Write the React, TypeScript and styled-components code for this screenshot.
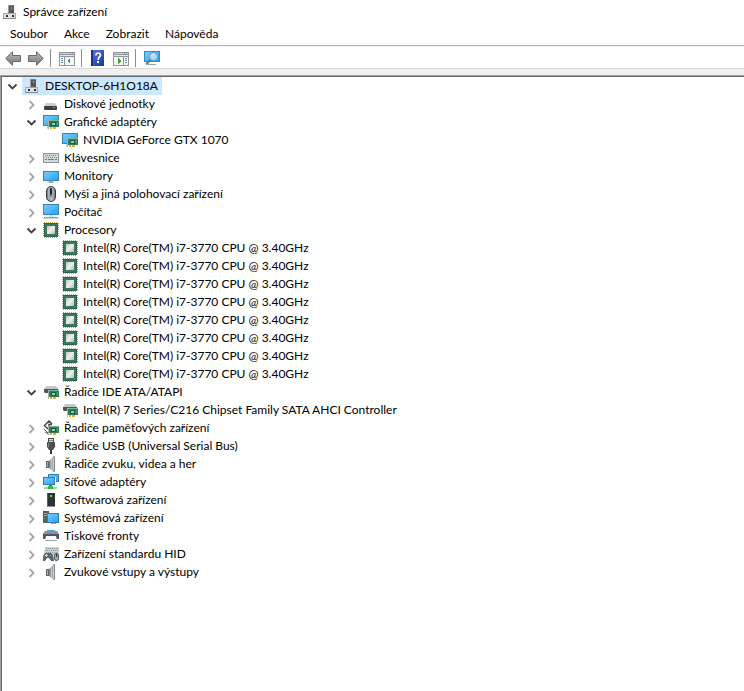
import React, { useState } from 'react';
import styled, { createGlobalStyle } from 'styled-components';

const GlobalStyle = createGlobalStyle`
  html, body, #root { height: 100%; }
  body {
    margin: 0;
    background: #fff;
    color: #000;
    font: 12px/18px Lato, "Open Sans", sans-serif;
  }
  button { font: inherit; color: inherit; }
`;

const Window = styled.main`
  display: flex;
  flex-direction: column;
  min-height: 100%;
`;

const TitleBar = styled.header`
  display: flex;
  align-items: center;
  gap: 5px;
  height: 23px;
  padding-left: 2px;
`;

const Title = styled.h1`
  margin: 0;
  font: inherit;
`;

const MenuBar = styled.nav`
  display: flex;
  height: 22px;
  padding-left: 2px;
  border-bottom: 1px solid #b0b0b3;
`;

const MenuItem = styled.button`
  padding: 0 8px;
  border: 0;
  background: none;
  &:hover { background: #e5f3ff; }
`;

const ToolBar = styled.div`
  display: flex;
  align-items: center;
  gap: 1px;
  height: 21px;
  padding-left: 2px;
  border-top: 1px solid #f4f4fa;
  border-bottom: 1px solid #d7d7d7;
`;

const ToolButton = styled.button`
  display: grid;
  place-items: center;
  width: 22px;
  height: 22px;
  padding: 0;
  border: 0;
  background: none;
  &:hover { background: #e5f3ff; }
`;

const Separator = styled.span`
  width: 1px;
  height: 18px;
  margin: 0 4px 0 2px;
  background: #8d8d8d;
`;

const Content = styled.section`
  display: flex;
  flex: 1;
  padding-top: 6px;
  background: #f0f0f0;
`;

const TreePane = styled.div`
  flex: 1;
  border: solid #a0a0a0;
  border-width: 1px 0 0 1px;
  background: #fff;
`;

const TreeInner = styled.div`
  height: 100%;
  box-sizing: border-box;
  border: solid #696969;
  border-width: 1px 0 0 1px;
`;

const Tree = styled.ul`
  margin: 0;
  padding: 0;
  list-style: none;
`;

const Branch = styled(Tree)`
  padding-left: 19px;
`;

const Row = styled.div`
  display: flex;
  height: 18px;
`;

const Toggle = styled.button<{ $open: boolean }>`
  display: grid;
  place-items: center;
  width: 20px;
  padding: 0;
  border: 0;
  background: none;
  color: ${(p) => (p.$open ? '#404040' : '#a6a6a6')};
`;

const Spacer = styled.span`
  width: 20px;
`;

const Label = styled.button<{ $selected: boolean }>`
  display: flex;
  align-items: center;
  gap: 5px;
  padding: 0 4px 0 2px;
  border: 0;
  outline: 0;
  white-space: nowrap;
  background: ${(p) => (p.$selected ? '#cce8ff' : 'none')};
`;

const Glyph = styled.svg.attrs({ width: 16, height: 16, viewBox: '0 0 16 16', 'aria-hidden': true })`
  display: block;
  flex: none;
`;

const Defs = styled.svg.attrs({ width: 0, height: 0, 'aria-hidden': true })`
  position: absolute;
`;

const Gradients = () => (
  <Defs>
    <defs>
      <linearGradient id="screen" x1="0" y1="0" x2="1" y2="1">
        <stop offset="0" stopColor="#7accff" />
        <stop offset="0.5" stopColor="#4fb8fb" />
        <stop offset="1" stopColor="#2a9df0" />
      </linearGradient>
      <linearGradient id="steel" x1="0" y1="0" x2="1" y2="0">
        <stop offset="0" stopColor="#6d7478" />
        <stop offset="0.55" stopColor="#c3c7ca" />
        <stop offset="1" stopColor="#6b7175" />
      </linearGradient>
      <linearGradient id="chip" x1="0" y1="0" x2="1" y2="1">
        <stop offset="0" stopColor="#c6c6c6" />
        <stop offset="0.5" stopColor="#efefef" />
        <stop offset="1" stopColor="#b8b8b8" />
      </linearGradient>
      <linearGradient id="arrow" x1="0" y1="0" x2="0" y2="1">
        <stop offset="0" stopColor="#bcbcbc" />
        <stop offset="1" stopColor="#747474" />
      </linearGradient>
      <linearGradient id="help" x1="0" y1="0" x2="1" y2="1">
        <stop offset="0" stopColor="#5877e0" />
        <stop offset="1" stopColor="#1733a0" />
      </linearGradient>
    </defs>
  </Defs>
);

const Board = () => (
  <g shapeRendering="crispEdges">
    <rect x="6" y="6" width="10" height="7" fill="#2f7d5a" />
    <rect x="5" y="6" width="1" height="9" fill="#a9b3af" />
    <rect x="6" y="6" width="10" height="1" fill="#74b795" />
    <rect x="8" y="8" width="5" height="4" fill="#1d5c40" />
    <rect x="9" y="9" width="3" height="2" fill="#8ed3ae" />
    <rect x="14" y="8" width="1" height="3" fill="#4ea27b" />
    <rect x="7" y="13" width="2" height="2" fill="#efab22" />
    <rect x="10" y="13" width="3" height="2" fill="#efab22" />
  </g>
);

const ManagerIcon = () => (
  <Glyph shapeRendering="crispEdges">
    <rect x="6" y="1" width="6" height="8" fill="#55595b" />
    <rect x="6" y="1" width="1" height="8" fill="#9a9ea0" />
    <rect x="7" y="1" width="5" height="1" fill="#7c8082" />
    <rect x="9" y="3" width="1" height="2" fill="#45d845" />
    <rect x="1" y="9" width="13" height="6" fill="#a2a5a6" />
    <rect x="2" y="10" width="11" height="4" fill="#e4e4e4" />
    <rect x="4" y="11" width="2" height="2" fill="#2c2c2c" />
    <rect x="10" y="11" width="2" height="2" fill="#2c2c2c" />
    <rect x="1" y="14" width="13" height="1" fill="#85888a" />
  </Glyph>
);

const DiskIcon = () => (
  <Glyph>
    <path d="M3 7h9l2 3H1z" fill="#cdd0d2" />
    <rect x="1" y="10" width="13" height="4" rx="1" fill="#3b3f41" />
    <rect x="10" y="11" width="2" height="1" fill="#3bd45c" />
  </Glyph>
);

const DisplayIcon = () => (
  <Glyph>
    <rect x="0.5" y="1.5" width="15" height="10" fill="url(#screen)" stroke="#3786b4" />
    <path d="M5 12v2h-1" fill="none" stroke="#9fb1bb" />
    <Board />
  </Glyph>
);

const KeyboardIcon = () => (
  <Glyph shapeRendering="crispEdges">
    <rect x="0" y="3" width="16" height="10" fill="#8e979d" />
    <rect x="1" y="4" width="14" height="8" fill="#d3d8db" />
    <path d="M2 5.500h12M3 7.500h11" stroke="#7b8489" strokeDasharray="1 1" />
    <path d="M2 9.500h2M5 9.500h6M12 9.500h2" stroke="#6f787d" />
  </Glyph>
);

const MonitorIcon = () => (
  <Glyph>
    <rect x="0.5" y="3.500" width="15" height="9" fill="url(#screen)" stroke="#3786b4" />
    <path d="M5 15h6l-1-2H6z" fill="#9ab0bd" />
  </Glyph>
);

const MouseIcon = () => (
  <Glyph>
    <rect x="3.5" y="0.5" width="9" height="15" rx="4.5" fill="url(#steel)" stroke="#353b43" />
    <path d="M5.500 2.500v10" stroke="#a9b6c4" />
    <rect x="7" y="2" width="2" height="7" rx="1" fill="#20252b" />
    <path d="M8 9v2" stroke="#454c54" />
  </Glyph>
);

const ComputerIcon = () => (
  <Glyph>
    <rect x="0.5" y="0.5" width="15" height="10" fill="url(#screen)" stroke="#3786b4" />
    <path d="M6 11h4v2H6z" fill="#d0dbe2" />
    <path d="M1 13.5h14" stroke="#8da0ad" />
    <path d="M0 14.5h16" stroke="#c6d2da" />
  </Glyph>
);

const CpuIcon = () => (
  <Glyph shapeRendering="crispEdges">
    <path d="M1 .5h14M1 15.5h14M.5 1v14M15.5 1v14" stroke="#c9a54b" strokeDasharray="1 1" />
    <rect x="1" y="1" width="14" height="14" fill="#2d6649" />
    <rect x="2" y="2" width="12" height="12" fill="#3a7a5b" />
    <rect x="4" y="4" width="8" height="8" fill="url(#chip)" />
  </Glyph>
);

const IdeIcon = () => (
  <Glyph>
    <path d="M3 2h10l2 3v1H1V5z" fill="#c4c7c9" />
    <path d="M1 5h14v1H6v3H2L1 8z" fill="#53575a" />
    <Board />
  </Glyph>
);

const StorageIcon = () => (
  <Glyph>
    <path d="M9 4L6 1 1.500 5.500 5 9M9 4.500H6V7h3" fill="none" stroke="#474747" strokeWidth="1.500" />
    <path d="M1 9l4 4M2 12l3 2" stroke="#5c5c5c" />
    <Board />
  </Glyph>
);

const UsbIcon = () => (
  <Glyph>
    <rect x="5.500" y="0.500" width="5" height="4" fill="#d7d7d7" stroke="#4a4a4a" />
    <path d="M7 2v1M9 2v1" stroke="#333" />
    <path d="M4 4h8v5l-2 3H6L4 9z" fill="#4c4e50" />
    <path d="M5.500 5v4" stroke="#85888a" />
    <rect x="7" y="12" width="2" height="4" fill="#37393a" />
  </Glyph>
);

const SpeakerIcon = () => (
  <Glyph>
    <path d="M3 5h3v7H3z" fill="#5f676c" />
    <path d="M4 6h1v5H4z" fill="#a3abb0" />
    <path d="M6 5l5-5v16l-5-4z" fill="url(#steel)" />
    <path d="M10 1l2-1v16l-2-1z" fill="#7d858a" />
    <path d="M10.500 1.500v13" stroke="#ccd1d4" />
  </Glyph>
);

const NetworkIcon = () => (
  <Glyph>
    <rect x="5.500" y="0.500" width="10" height="7" fill="url(#screen)" stroke="#3480ab" />
    <rect x="0" y="3" width="13" height="9" fill="#fff" />
    <rect x="0.500" y="3.500" width="11" height="7" fill="url(#screen)" stroke="#3480ab" />
    <rect x="6" y="11" width="3" height="2" fill="#2f9d48" />
    <rect x="1" y="13" width="13" height="2" fill="#8fdc98" />
    <rect x="5" y="12" width="5" height="3" fill="#36b44c" />
  </Glyph>
);

const SoftwareIcon = () => (
  <Glyph shapeRendering="crispEdges">
    <rect x="4" y="1" width="8" height="14" fill="#2f3333" />
    <rect x="4" y="1" width="1" height="14" fill="#5b6161" />
    <rect x="7" y="3" width="2" height="2" fill="#52e652" />
    <rect x="4" y="14" width="8" height="1" fill="#8a9090" />
  </Glyph>
);

const SystemIcon = () => (
  <Glyph>
    <rect x="0" y="1" width="6" height="12" fill="#565d61" />
    <path d="M1 3.500h4M1 5.500h4" stroke="#a7afb3" />
    <rect x="1" y="8" width="1" height="1" fill="#4fe24f" />
    <rect x="4.500" y="3.500" width="11" height="9" fill="url(#screen)" stroke="#3480ab" />
    <path d="M8 13.500h5" stroke="#8ea2ae" />
  </Glyph>
);

const PrinterIcon = () => (
  <Glyph>
    <path d="M4 2h8v3H4z" fill="#3aa8ea" />
    <path d="M5 2h3v2H5z" fill="#a4dcfa" />
    <path d="M2 3h12l2 3v5H0V6z" fill="#8a9296" />
    <path d="M4 2h8v2H4z" fill="#3aa8ea" />
    <path d="M0 6h16v5H0z" fill="#50575b" />
    <path d="M3 8h10l1 5H2z" fill="#f6f8f9" />
    <path d="M2 12.500h12" stroke="#9ca5aa" />
    <rect x="13" y="5" width="1" height="1" fill="#4ae055" />
  </Glyph>
);

const HidIcon = () => (
  <Glyph>
    <path d="M2 1h14v8H1z" fill="#cbd0d3" />
    <path d="M3 2.500h12M2 4.500h13M3 6.500h12" stroke="#8b9499" strokeDasharray="1 1" />
    <path d="M1 8l2-1h5l2 2 1 6H8l-2-3H4l-2 3H0v-4z" fill="#58636b" />
    <path d="M2 9.500h3M3.500 8v3" stroke="#d4dade" />
    <rect x="7" y="9" width="1" height="1" fill="#4db6f3" />
    <rect x="11.500" y="7.500" width="4" height="7" rx="2" fill="#a6aeb4" stroke="#404a52" />
    <path d="M13.500 8v3" stroke="#272f35" />
  </Glyph>
);

const ArrowIcon = ({ forward = false }: { forward?: boolean }) => (
  <Glyph>
    <path
      transform={forward ? 'translate(16 0) scale(-1 1)' : undefined}
      d="M.7 8.500L7.500 1.800V5.500h8v6h-8v3.700z"
      fill="url(#arrow)"
      stroke="#686868"
      strokeLinejoin="round"
    />
  </Glyph>
);

const PaneIcon = ({ flipped = false }: { flipped?: boolean }) => (
  <Glyph shapeRendering="crispEdges">
    <rect x="0" y="2" width="16" height="14" fill="#8f979d" />
    <rect x="1" y="3" width="10" height="1" fill="#cdd3d8" />
    <path d="M12 3h1v1h-1zM14 3h1v1h-1z" fill="#dfe4e8" />
    <rect x="1" y="5" width="14" height="1" fill="#e4e8eb" />
    <g transform={flipped ? 'translate(16 0) scale(-1 1)' : undefined}>
      <rect x="1" y="7" width="4" height="8" fill="#fff" />
      <rect x="6" y="7" width="9" height="8" fill="#f3f5f6" />
      <path d="M2 8.500h2M2 10.500h2M2 12.500h2" stroke="#5f7f9f" />
      <path d="M11 8v6L8 11z" fill="#3ba52c" />
    </g>
  </Glyph>
);

const HelpIcon = () => (
  <Glyph>
    <rect x="1" y="0" width="13" height="16" fill="url(#help)" />
    <rect x="1" y="0" width="2" height="16" fill="#1b2f86" />
    <path d="M6 5.500V4.500Q6.500 3 8.300 3t2.200 1.800Q10.500 6 9.300 7T8.300 10" fill="none" stroke="#fff" strokeWidth="1.700" />
    <rect x="7" y="11" width="2" height="2" fill="#fff" />
  </Glyph>
);

const ScanIcon = () => (
  <Glyph>
    <rect x="0.500" y="1.500" width="15" height="10" fill="url(#screen)" stroke="#3786b4" />
    <path d="M4 14.500h8" stroke="#8ea2ae" />
    <path d="M7 9.500l-5 5" stroke="#587d96" strokeWidth="2" />
    <circle cx="9.500" cy="6.500" r="4" fill="#a9dcfa" stroke="#6d9ab4" />
    <path d="M7.500 6Q8 4.500 10 4.300" fill="none" stroke="#f0fbff" />
  </Glyph>
);

const Chevron = ({ open }: { open: boolean }) => (
  <Glyph>
    <path
      d={open ? 'M4.500 6.500l4 4 4-4' : 'M6.500 5l4 4-4 4'}
      fill="none"
      stroke="currentColor"
      strokeWidth="1.800"
    />
  </Glyph>
);

interface Device {
  name: string;
  icon: React.ComponentType;
  children?: Device[];
  open?: boolean;
}

const processors: Device[] = Array.from({ length: 8 }, () => ({
  name: 'Intel(R) Core(TM) i7-3770 CPU @ 3.40GHz',
  icon: CpuIcon,
}));

const computer: Device = {
  name: 'DESKTOP-6H1O18A',
  icon: ManagerIcon,
  open: true,
  children: [
    { name: 'Diskové jednotky', icon: DiskIcon, children: [] },
    {
      name: 'Grafické adaptéry',
      icon: DisplayIcon,
      open: true,
      children: [{ name: 'NVIDIA GeForce GTX 1070', icon: DisplayIcon }],
    },
    { name: 'Klávesnice', icon: KeyboardIcon, children: [] },
    { name: 'Monitory', icon: MonitorIcon, children: [] },
    { name: 'Myši a jiná polohovací zařízení', icon: MouseIcon, children: [] },
    { name: 'Počítač', icon: ComputerIcon, children: [] },
    { name: 'Procesory', icon: CpuIcon, open: true, children: processors },
    {
      name: 'Řadiče IDE ATA/ATAPI',
      icon: IdeIcon,
      open: true,
      children: [{ name: 'Intel(R) 7 Series/C216 Chipset Family SATA AHCI Controller', icon: IdeIcon }],
    },
    { name: 'Řadiče paměťových zařízení', icon: StorageIcon, children: [] },
    { name: 'Řadiče USB (Universal Serial Bus)', icon: UsbIcon, children: [] },
    { name: 'Řadiče zvuku, videa a her', icon: SpeakerIcon, children: [] },
    { name: 'Síťové adaptéry', icon: NetworkIcon, children: [] },
    { name: 'Softwarová zařízení', icon: SoftwareIcon, children: [] },
    { name: 'Systémová zařízení', icon: SystemIcon, children: [] },
    { name: 'Tiskové fronty', icon: PrinterIcon, children: [] },
    { name: 'Zařízení standardu HID', icon: HidIcon, children: [] },
    { name: 'Zvukové vstupy a výstupy', icon: SpeakerIcon, children: [] },
  ],
};

interface NodeProps {
  device: Device;
  path: string;
  selected: string;
  onSelect: (path: string) => void;
}

function DeviceNode({ device, path, selected, onSelect }: NodeProps) {
  const [open, setOpen] = useState(Boolean(device.open));
  const Icon = device.icon;
  return (
    <li>
      <Row>
        {device.children ? (
          <Toggle $open={open} aria-expanded={open} aria-label={device.name} onClick={() => setOpen(!open)}>
            <Chevron open={open} />
          </Toggle>
        ) : (
          <Spacer />
        )}
        <Label $selected={selected === path} onClick={() => onSelect(path)}>
          <Icon />
          {device.name}
        </Label>
      </Row>
      {open && device.children && (
        <Branch>
          {device.children.map((child, i) => (
            <DeviceNode key={i} device={child} path={`${path}.${i}`} selected={selected} onSelect={onSelect} />
          ))}
        </Branch>
      )}
    </li>
  );
}

export default function App() {
  const [selected, setSelected] = useState('0');
  return (
    <Window>
      <GlobalStyle />
      <Gradients />
      <TitleBar>
        <ManagerIcon />
        <Title>Správce zařízení</Title>
      </TitleBar>
      <MenuBar>
        {['Soubor', 'Akce', 'Zobrazit', 'Nápověda'].map((item) => (
          <MenuItem key={item}>{item}</MenuItem>
        ))}
      </MenuBar>
      <ToolBar>
        <ToolButton aria-label="Zpět"><ArrowIcon /></ToolButton>
        <ToolButton aria-label="Vpřed"><ArrowIcon forward /></ToolButton>
        <Separator />
        <ToolButton aria-label="Strom konzoly"><PaneIcon /></ToolButton>
        <Separator />
        <ToolButton aria-label="Nápověda"><HelpIcon /></ToolButton>
        <ToolButton aria-label="Podokno akcí"><PaneIcon flipped /></ToolButton>
        <Separator />
        <ToolButton aria-label="Vyhledat změny hardwaru"><ScanIcon /></ToolButton>
      </ToolBar>
      <Content>
        <TreePane>
          <TreeInner>
            <Tree>
              <DeviceNode device={computer} path="0" selected={selected} onSelect={setSelected} />
            </Tree>
          </TreeInner>
        </TreePane>
      </Content>
    </Window>
  );
}
